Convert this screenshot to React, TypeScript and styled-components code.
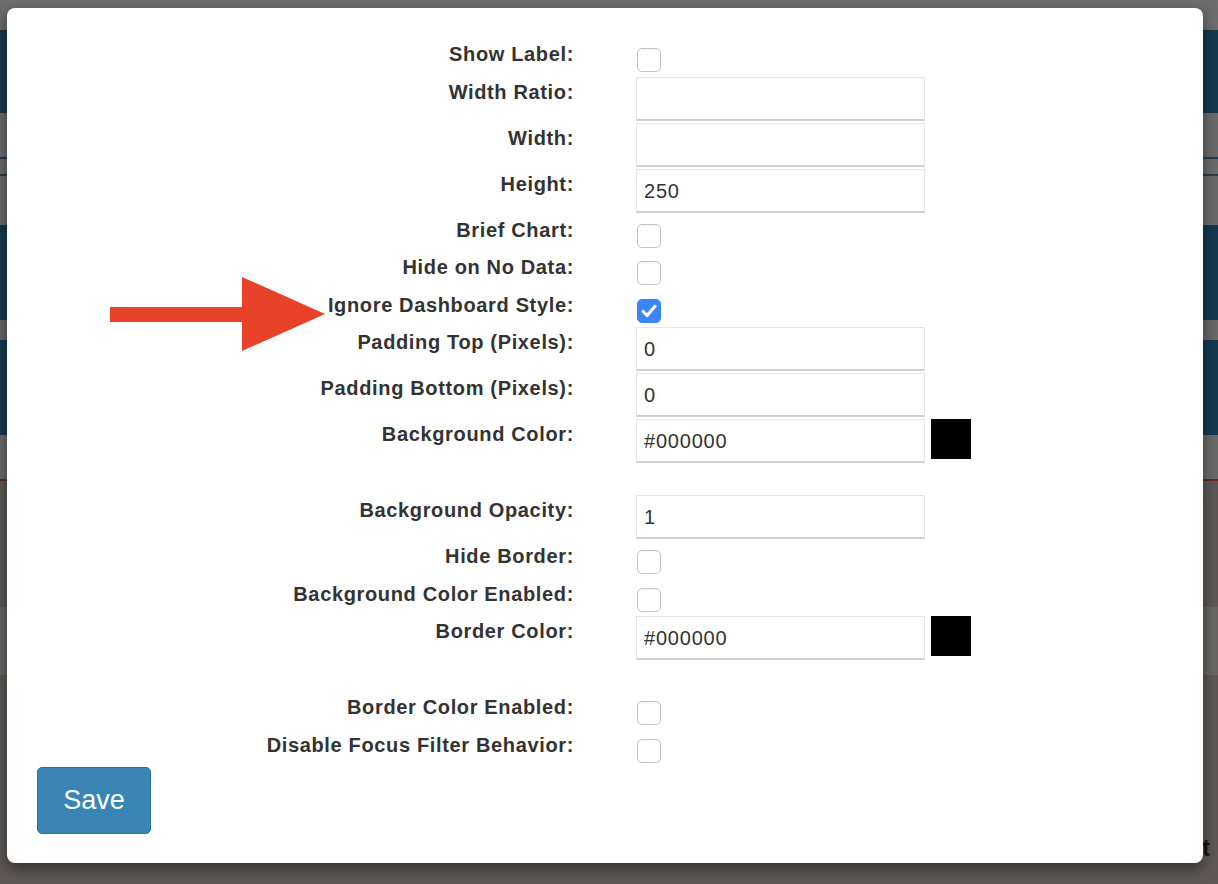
import React from "react";
import styled, { createGlobalStyle } from "styled-components";

type FieldKind = "check" | "input" | "color";

interface FieldDef {
    label: string;
    kind: FieldKind;
    value?: string;
    checked?: boolean;
}

const FIELDS: FieldDef[] = [
    { label: "Show Label:", kind: "check" },
    { label: "Width Ratio:", kind: "input", value: "" },
    { label: "Width:", kind: "input", value: "" },
    { label: "Height:", kind: "input", value: "250" },
    { label: "Brief Chart:", kind: "check" },
    { label: "Hide on No Data:", kind: "check" },
    { label: "Ignore Dashboard Style:", kind: "check", checked: true },
    { label: "Padding Top (Pixels):", kind: "input", value: "0" },
    { label: "Padding Bottom (Pixels):", kind: "input", value: "0" },
    { label: "Background Color:", kind: "color", value: "#000000" },
    { label: "Background Opacity:", kind: "input", value: "1" },
    { label: "Hide Border:", kind: "check" },
    { label: "Background Color Enabled:", kind: "check" },
    { label: "Border Color:", kind: "color", value: "#000000" },
    { label: "Border Color Enabled:", kind: "check" },
    { label: "Disable Focus Filter Behavior:", kind: "check" },
];

// dimmed page sitting behind the dialog
const BANDS: { h: number; c: string }[] = [
    { h: 30, c: "#6e6e6e" },
    { h: 83, c: "#133a50" },
    { h: 44, c: "#6c6c6c" },
    { h: 2, c: "#1d3f57" },
    { h: 15, c: "#6c6c6c" },
    { h: 2, c: "#1d3f57" },
    { h: 49, c: "#6c6c6c" },
    { h: 95, c: "#133a50" },
    { h: 20, c: "#6a6a6a" },
    { h: 95, c: "#133a50" },
    { h: 44, c: "#6b6b6b" },
    { h: 2, c: "#6b2a1c" },
    { h: 126, c: "#5e5958" },
    { h: 68, c: "#696766" },
];

const GlobalStyle = createGlobalStyle`
    html, body {
        margin: 0;
        padding: 0;
        background: #5e5958;
        font-family: "Liberation Sans", Arial, sans-serif;
    }
    * {
        box-sizing: border-box;
    }
`;

const Page = styled.div`
    position: relative;
    width: 1218px;
    height: 884px;
    overflow: hidden;
    background: #5e5958;
`;

const Backdrop = styled.div`
    display: flex;
    flex-direction: column;
`;

const Band = styled.div<{ $h: number; $c: string }>`
    height: ${(p) => p.$h}px;
    background: ${(p) => p.$c};
`;

const FooterText = styled.div`
    display: flex;
    justify-content: flex-end;
    padding: 160px 8px 0 0;
    font-size: 23px;
    font-weight: bold;
    color: #161414;
`;

const Dialog = styled.div`
    position: absolute;
    left: 7px;
    top: 8px;
    width: 1196px;
    height: 855px;
    background: #fff;
    border-radius: 8px;
    box-shadow: 0 5px 15px rgba(0, 0, 0, 0.5);
    padding: 31px 30px 0;
`;

const Form = styled.div`
    display: flex;
    flex-direction: column;
`;

const Row = styled.div<{ $kind: FieldKind }>`
    display: flex;
    align-items: flex-start;
    height: ${(p) => (p.$kind === "check" ? 37.5 : p.$kind === "color" ? 76 : 46)}px;
`;

const Label = styled.label`
    width: 537px;
    margin-right: 62px;
    padding-top: 3px;
    text-align: right;
    font-size: 20px;
    line-height: 24px;
    font-weight: bold;
    letter-spacing: 0.65px;
    color: #333;
    white-space: nowrap;
`;

const Box = styled.span<{ $checked: boolean }>`
    display: flex;
    align-items: center;
    justify-content: center;
    width: 24px;
    height: 24px;
    margin: 9px 0 0 1px;
    border-radius: 5px;
    border: 1px solid ${(p) => (p.$checked ? "#3b86f7" : "#c3c3c3")};
    background: ${(p) => (p.$checked ? "#3b86f7" : "#fff")};
    box-shadow: ${(p) => (p.$checked ? "none" : "inset 0 1px 1px rgba(0,0,0,0.04)")};
`;

const TextInput = styled.input`
    width: 289px;
    height: 44px;
    padding: 2px 7px 0;
    border: 1px solid #e6e6e6;
    border-bottom: 2px solid #cfcfcf;
    border-radius: 0;
    outline: none;
    font-family: "Liberation Sans", Arial, sans-serif;
    font-size: 20px;
    letter-spacing: 0.8px;
    color: #333;
    background: #fff;
`;

const Swatch = styled.span<{ $color: string }>`
    width: 40px;
    height: 40px;
    margin-left: 6px;
    background: ${(p) => p.$color};
`;

const SaveButton = styled.button`
    width: 114px;
    height: 67px;
    margin-top: 0;
    border: 1px solid #2d6fa3;
    border-radius: 5px;
    background: #3a85b6;
    color: #fff;
    font-family: "Liberation Sans", Arial, sans-serif;
    font-size: 27px;
    cursor: pointer;
`;

const Pointer = styled.svg`
    position: absolute;
    left: 103px;
    top: 261px;
`;

const CheckMark = () => (
    <svg width="20" height="20" viewBox="0 0 24 24">
        <path d="M5 12.6l4.7 4.8L19.2 6.4" fill="none" stroke="#fff" strokeWidth="3.8" strokeLinecap="round" strokeLinejoin="round" />
    </svg>
);

const Field: React.FC<{ field: FieldDef }> = ({ field }) => (
    <Row $kind={field.kind}>
        <Label>{field.label}</Label>
        {field.kind === "check" ? (
            <Box $checked={!!field.checked}>{field.checked && <CheckMark />}</Box>
        ) : (
            <>
                <TextInput defaultValue={field.value} readOnly />
                {field.kind === "color" && <Swatch $color={field.value || "#000"} />}
            </>
        )}
    </Row>
);

export default function App() {
    return (
        <Page>
            <GlobalStyle />
            <Backdrop>
                {BANDS.map((b, i) => (
                    <Band key={i} $h={b.h} $c={b.c} />
                ))}
                <FooterText>Edit</FooterText>
            </Backdrop>
            <Dialog>
                <Form>
                    {FIELDS.map((f) => (
                        <Field key={f.label} field={f} />
                    ))}
                </Form>
                <SaveButton>Save</SaveButton>
                <Pointer width="220" height="90" viewBox="0 0 220 90">
                    <polygon points="0,38 132,38 132,8 215,45 132,82 132,53 0,53" fill="#e8432a" />
                </Pointer>
            </Dialog>
        </Page>
    );
}
